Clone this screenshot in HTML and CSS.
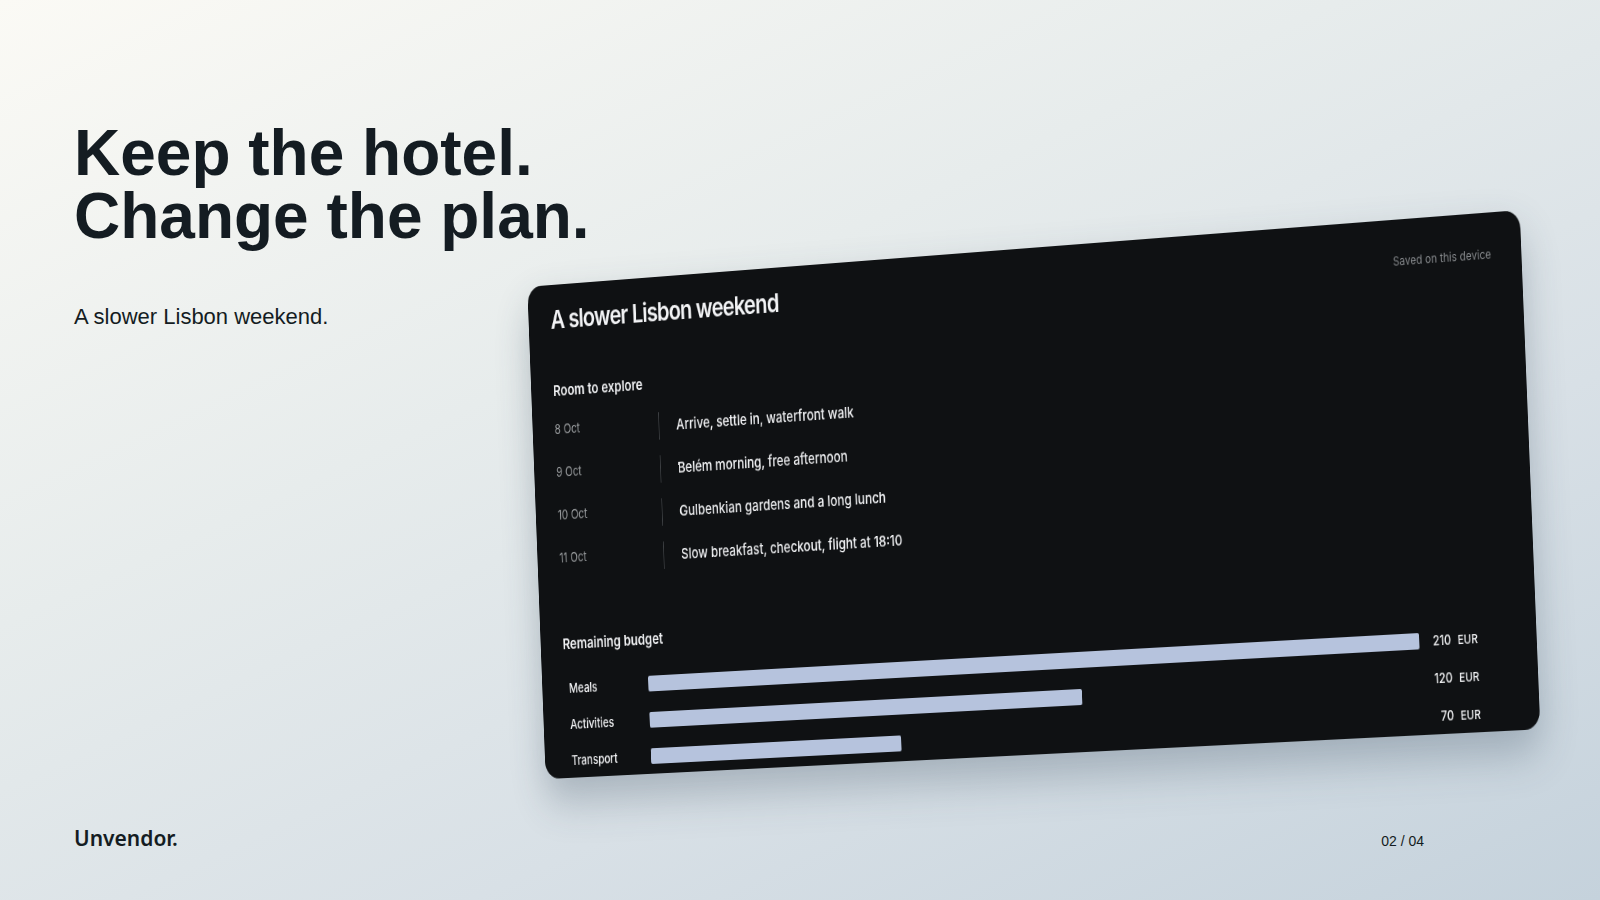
FILE: index.html
```
<!DOCTYPE html>
<html lang="en">

<head>
    <meta charset="UTF-8">
    <title>Unvendor</title>
    <link rel="stylesheet" href="styles.css">
</head>

<body>
    <main class="slide">
        <div class="copy">
            <h1>Keep the hotel.<br>Change the plan.</h1>
            <p>A slower Lisbon weekend.</p>
        </div>

        <section class="card">
            <header class="card-header">
                <h2>A slower Lisbon weekend</h2>
                <span class="saved">Saved on this device</span>
            </header>

            <h3>Room to explore</h3>
            <ul class="days">
                <li><time>8 Oct</time><span>Arrive, settle in, waterfront walk</span></li>
                <li><time>9 Oct</time><span>Belém morning, free afternoon</span></li>
                <li><time>10 Oct</time><span>Gulbenkian gardens and a long lunch</span></li>
                <li><time>11 Oct</time><span>Slow breakfast, checkout, flight at 18:10</span></li>
            </ul>

            <h3>Remaining budget</h3>
            <ul class="budget">
                <li>
                    <span>Meals</span>
                    <div class="track"><div class="bar" style="width: 100%"></div></div>
                    <span class="amount"><span>210</span><small>EUR</small></span>
                </li>
                <li>
                    <span>Activities</span>
                    <div class="track"><div class="bar" style="width: 57.14%"></div></div>
                    <span class="amount"><span>120</span><small>EUR</small></span>
                </li>
                <li>
                    <span>Transport</span>
                    <div class="track"><div class="bar" style="width: 33.33%"></div></div>
                    <span class="amount"><span>70</span><small>EUR</small></span>
                </li>
            </ul>
        </section>

        <footer class="footer">
            <strong class="brand">Unvendor.</strong>
            <span class="page">02 / 04</span>
        </footer>
    </main>
</body>

</html>
```
FILE: styles.css
```
* {
    box-sizing: border-box;
}

body {
    margin: 0;
    font-family: "Liberation Sans", Arial, sans-serif;
    color: #141c22;
}

h1,
h2,
h3,
p,
ul {
    margin: 0;
    padding: 0;
}

ul {
    list-style: none;
}

/* copy and card share the first row, the card lies on top */
.slide {
    display: grid;
    grid-template-rows: 1fr auto;
    min-height: 100vh;
    padding: 122px 0 49px 74px;
    overflow: hidden;
    background: linear-gradient(155deg, #fbfaf5 0%, #e7ecec 38%, #d8e0e6 68%, #c5d2dc 100%);
}

.copy {
    grid-area: 1 / 1;
}

.copy h1 {
    font-size: 64px;
    line-height: 63px;
    font-weight: 700;
}

.copy p {
    margin-top: 55px;
    font-size: 22px;
    line-height: 28px;
}

.card {
    grid-area: 1 / 1;
    justify-self: end;
    align-self: start;
    width: calc(100% - 282px);
    height: 506px;
    margin: 127px -42px 0 0;
    padding: 20px 36px 0 29px;
    overflow: hidden;
    border-radius: 18px;
    background: #0f1113;
    color: #f2f3f5;
    font-family: Inter, "Liberation Sans", sans-serif;
    box-shadow: 0 22px 44px rgba(50, 70, 90, 0.3);
    transform: perspective(14000px) rotateZ(-3.65deg) rotateY(-36.9deg) rotateX(2.4deg);
}

.card-header {
    display: flex;
    justify-content: space-between;
    align-items: baseline;
    margin-bottom: 45px;
}

.card h2 {
    font-size: 26px;
    line-height: 32px;
    font-weight: 600;
    letter-spacing: -1px;
}

.saved {
    font-size: 12px;
    color: #85888b;
}

.card h3 {
    font-size: 15px;
    line-height: 24px;
    font-weight: 600;
}

.days {
    margin: 17px 0 59px;
}

.days li {
    display: flex;
    height: 28px;
    margin-bottom: 16px;
    line-height: 20px;
}

.days time {
    width: 136px;
    font-size: 13px;
    color: #9b9ea0;
}

.days span {
    padding-left: 22px;
    border-left: 1px solid #3c3f42;
    font-size: 15px;
    line-height: 28px;
    font-weight: 500;
}

.budget {
    margin-top: 14px;
    padding-left: 6px;
}

.budget li {
    display: flex;
    align-items: center;
    height: 37px;
    font-size: 13px;
    font-weight: 500;
}

.budget li > span:first-child {
    width: 104px;
}

.track {
    flex: 1;
}

.bar {
    height: 16px;
    border-radius: 2px;
    background: #b6c3dd;
}

.amount {
    display: flex;
    justify-content: flex-end;
    align-items: baseline;
    gap: 8px;
    width: 70px;
    margin-right: 34px;
}

.amount small {
    font-size: 12px;
}

.footer {
    display: flex;
    justify-content: space-between;
    align-items: baseline;
    padding-right: 176px;
}

.brand {
    font-family: "Noto Sans", sans-serif;
    font-size: 21px;
    line-height: 26px;
    font-weight: 600;
}

.page {
    font-size: 14px;
}
```
